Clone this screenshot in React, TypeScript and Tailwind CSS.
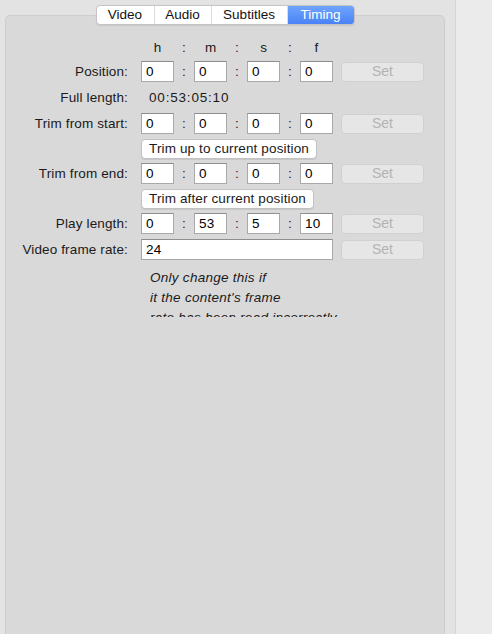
import { ReactNode } from 'react';

// Timing tab of the content properties panel: h:m:s:f fields per trim point.

const font = { fontFamily: '"Liberation Sans", Arial, sans-serif' };

const tabs = ['Video', 'Audio', 'Subtitles', 'Timing'];
const tabWidths = ['w-[58px]', 'w-[57px]', 'w-[76px]', 'w-[66px]'];

function Label({ children }: { children?: ReactNode }) {
  return <div className="w-[122px] shrink-0 text-right text-[13.5px] leading-4 tracking-[0.01em] text-[#1a1a1a]">{children}</div>;
}

function Field({ value, wide }: { value: string; wide?: boolean }) {
  return (
    <div
      className={`${wide ? 'w-[192px]' : 'w-[33px]'} h-[21px] shrink-0 border border-[#a9a9a9] border-t-[#8e8e8e] bg-white pl-[4px] text-[13.5px] leading-[19px] tracking-[0.02em] text-black`}
    >
      {value}
    </div>
  );
}

function Colon() {
  return <div className="w-[20px] shrink-0 text-center text-[13.5px] leading-4 text-[#1a1a1a]">:</div>;
}

function SetButton() {
  return (
    <div className="ml-[8px] flex h-[20px] w-[83px] items-center justify-center rounded-[4px] border border-[#d0d0d0] bg-[#e6e6e6] text-[14px] text-[#b3b3b3]">
      Set
    </div>
  );
}

function TimeRow({ label, values, className = '' }: { label: string; values: string[]; className?: string }) {
  return (
    <div className={`flex h-[21px] items-center ${className}`}>
      <Label>{label}</Label>
      <div className="ml-[13px] flex items-center">
        {values.map((v, i) => (
          <div key={i} className="flex items-center">
            {i > 0 && <Colon />}
            <Field value={v} />
          </div>
        ))}
        <SetButton />
      </div>
    </div>
  );
}

function PushButton({ children, className = '' }: { children: ReactNode; className?: string }) {
  return (
    <div className={`flex h-[20px] ${className}`}>
      <div className="w-[122px] shrink-0" />
      <div className="ml-[13px] flex items-center rounded-[4px] border border-[#c2c2c2] bg-white px-[7px] text-[13.5px] leading-[18px] tracking-[0.01em] text-[#1a1a1a] shadow-[0_1px_0_rgba(0,0,0,0.08)]">
        {children}
      </div>
    </div>
  );
}

export default function App() {
  return (
    <div className="flex h-[634px] w-[492px] overflow-hidden bg-[#e3e3e3]" style={font}>
      <div className="w-[455px] shrink-0 px-[5px] pt-[15px]">
        <div className="h-[640px] w-[440px] rounded-[5px] border border-[#cdcdcd] bg-[#d9d9d9]">
          {/* segmented tab control sits over the panel's top edge */}
          <div className="-mt-[11px] flex justify-center">
            <div className="flex h-[20px] overflow-hidden rounded-[4px] border border-[#c4c4c4] bg-white text-[13.5px] leading-[18px] shadow-[0_1px_1px_rgba(0,0,0,0.08)]">
              {tabs.map((t, i) => (
                <div
                  key={t}
                  className={`${tabWidths[i]} text-center ${
                    t === 'Timing'
                      ? 'bg-gradient-to-b from-[#6fa4fc] to-[#4a82f6] text-white'
                      : 'border-r border-[#dcdcdc] text-[#111]'
                  }`}
                >
                  {t}
                </div>
              ))}
            </div>
          </div>

          <div className="pt-[15px]">
            <div className="flex h-[16px] items-center">
              <div className="w-[122px] shrink-0" />
              <div className="ml-[13px] flex items-center text-[13.5px] leading-4 text-[#1a1a1a]">
                {['h', 'm', 's', 'f'].map((c, i) => (
                  <div key={c} className="flex">
                    {i > 0 && <Colon />}
                    <div className="w-[33px] text-center">{c}</div>
                  </div>
                ))}
              </div>
            </div>

            <TimeRow label="Position:" values={['0', '0', '0', '0']} className="mt-[5px]" />

            <div className="mt-[5px] flex h-[21px] items-center">
              <Label>Full length:</Label>
              <div className="ml-[21px] text-[13.5px] leading-4 tracking-[0.06em] text-[#1a1a1a]">00:53:05:10</div>
            </div>

            <TimeRow label="Trim from start:" values={['0', '0', '0', '0']} className="mt-[5px]" />
            <PushButton className="mt-[5px]">Trim up to current position</PushButton>
            <TimeRow label="Trim from end:" values={['0', '0', '0', '0']} className="mt-[4px]" />
            <PushButton className="mt-[5px]">Trim after current position</PushButton>
            <TimeRow label="Play length:" values={['0', '53', '5', '10']} className="mt-[4px]" />

            <div className="mt-[5px] flex h-[21px] items-center">
              <Label>Video frame rate:</Label>
              <div className="ml-[13px] flex items-center">
                <Field value="24" wide />
                <SetButton />
              </div>
            </div>

            <div className="mt-[8px] flex">
              <div className="w-[122px] shrink-0" />
              <div className="ml-[22px] h-[49px] overflow-hidden whitespace-nowrap text-[13.5px] italic leading-5 tracking-[0.02em] text-[#1a1a1a]">
                Only change this if
                <br />
                it the content's frame
                <br />
                rate has been read incorrectly.
              </div>
            </div>
          </div>
        </div>
      </div>
      <div className="w-px shrink-0 bg-[#d6d6d6]" />
      <div className="flex-1 bg-[#ebebeb]" />
    </div>
  );
}
